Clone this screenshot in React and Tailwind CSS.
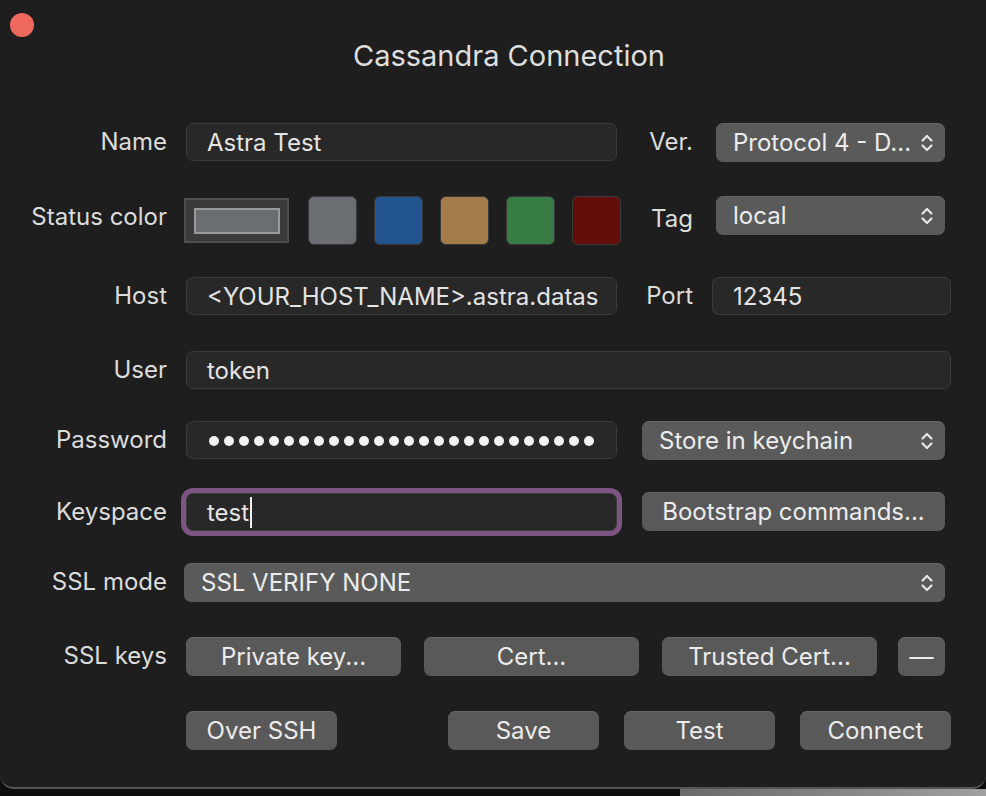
import React from 'react'

const font = { fontFamily: 'Inter, "Noto Sans", sans-serif' }

function Chevrons() {
  return (
    <svg width="14" height="22" viewBox="0 0 14 22" fill="none" stroke="#e6e6e6" strokeWidth="2.2" strokeLinecap="round" strokeLinejoin="round">
      <path d="M2.5 8.5 L7 4 L11.5 8.5" />
      <path d="M2.5 13.5 L7 18 L11.5 13.5" />
    </svg>
  )
}

function Label({ children, className = 'w-[167px]' }) {
  return <div className={`${className} shrink-0 text-right text-[24px] text-[#dcdcdc]`}>{children}</div>
}

function Field({ children, className = '' }) {
  return (
    <div className={`h-[38px] shrink-0 rounded-[7px] border border-[#3b3b3b] bg-[#282828] pl-[20px] pr-2 pt-[2px] flex items-center overflow-hidden whitespace-nowrap text-[24px] text-[#e4e4e4] ${className}`}>
      {children}
    </div>
  )
}

function Select({ children, className = '' }) {
  return (
    <div className={`h-[39px] shrink-0 rounded-[7px] bg-[#5a5a5a] border-t border-[#666] pl-[17px] pr-[11px] flex items-center justify-between whitespace-nowrap text-[24px] text-[#ececec] ${className}`}>
      <span>{children}</span>
      <Chevrons />
    </div>
  )
}

function Button({ children, className = '' }) {
  return (
    <div className={`h-[39px] shrink-0 rounded-[7px] bg-[#595959] border-t border-[#666] flex items-center justify-center whitespace-nowrap text-[24px] text-[#ececec] ${className}`}>
      {children}
    </div>
  )
}

const swatches = ['#6a6d72', '#22558f', '#a47c4c', '#377c45', '#620f0b']

export default function App() {
  return (
    <div className="w-[986px] h-[796px] bg-[#0e0e0e] overflow-hidden" style={font}>
      <div className="w-[986px] h-[789px] bg-[#1e1e1e] rounded-b-[14px] border-b-2 border-[#555] flex flex-col">
        {/* title bar */}
        <div className="h-[122px] shrink-0 flex items-start">
          <div className="mt-[13px] ml-[10px] w-[24px] h-[24px] rounded-full bg-[#ee6a5f]" />
          <div className="ml-[319px] mt-[34px] text-[29px] text-[#dedede]">Cassandra Connection</div>
        </div>

        {/* Name / Ver. */}
        <div className="h-[40px] flex items-center">
          <Label>Name</Label>
          <Field className="ml-[19px] w-[431px]">Astra Test</Field>
          <Label className="w-[76px]">Ver.</Label>
          <Select className="ml-[23px] w-[229px]">Protocol 4 - D...</Select>
        </div>

        {/* Status color / Tag */}
        <div className="mt-[34px] h-[49px] flex items-center">
          <Label className="w-[167px] mb-[8px]">Status color</Label>
          <div className="ml-[17px] w-[105px] h-[45px] shrink-0 border-2 border-[#4e4e4e] bg-[#3a3a3a] flex items-center justify-center">
            <div className="w-[86px] h-[26px] border-2 border-[#9a9a9a] bg-[#6a6d72]" />
          </div>
          <div className="ml-[19px] flex gap-[17px]">
            {swatches.map((c) => (
              <div key={c} className="w-[49px] h-[49px] rounded-[6px] border border-[#3a3a3a]" style={{ backgroundColor: c }} />
            ))}
          </div>
          <Label className="w-[72px] mb-[4px]">Tag</Label>
          <Select className="ml-[23px] w-[229px] self-start">local</Select>
        </div>

        {/* Host / Port */}
        <div className="mt-[31px] h-[40px] flex items-center">
          <Label>Host</Label>
          <Field className="ml-[19px] w-[431px]">&lt;YOUR_HOST_NAME&gt;.astra.datas</Field>
          <Label className="w-[76px]">Port</Label>
          <Field className="ml-[19px] w-[239px]">12345</Field>
        </div>

        {/* User */}
        <div className="mt-[34px] h-[40px] flex items-center">
          <Label>User</Label>
          <Field className="ml-[19px] w-[765px]">token</Field>
        </div>

        {/* Password */}
        <div className="mt-[30px] h-[40px] flex items-center">
          <Label>Password</Label>
          <Field className="ml-[19px] w-[431px] !pl-[22px]">
            <div className="flex gap-[5px]">
              {Array.from({ length: 26 }).map((_, i) => (
                <span key={i} className="w-[10px] h-[10px] rounded-full bg-[#f2f2f2]" />
              ))}
            </div>
          </Field>
          <Select className="ml-[25px] w-[303px]">Store in keychain</Select>
        </div>

        {/* Keyspace */}
        <div className="mt-[26px] h-[51px] flex items-center">
          <Label>Keyspace</Label>
          <Field className="ml-[19px] w-[431px] shadow-[0_0_0_5px_#7c5583]">
            <span>test</span>
            <span className="ml-[1px] w-[2px] h-[31px] bg-[#f0f0f0]" />
          </Field>
          <Button className="ml-[25px] w-[303px]">Bootstrap commands...</Button>
        </div>

        {/* SSL mode */}
        <div className="mt-[25px] h-[40px] flex items-center">
          <Label>SSL mode</Label>
          <Select className="ml-[17px] w-[761px]">SSL VERIFY NONE</Select>
        </div>

        {/* SSL keys */}
        <div className="mt-[34px] h-[40px] flex items-center">
          <Label>SSL keys</Label>
          <Button className="ml-[19px] w-[215px]">Private key...</Button>
          <Button className="ml-[23px] w-[215px]">Cert...</Button>
          <Button className="ml-[23px] w-[215px]">Trusted Cert...</Button>
          <Button className="ml-[21px] w-[47px]">—</Button>
        </div>

        {/* actions */}
        <div className="mt-[34px] h-[40px] flex items-center">
          <Button className="ml-[186px] w-[151px]">Over SSH</Button>
          <Button className="ml-[111px] w-[151px]">Save</Button>
          <Button className="ml-[25px] w-[151px]">Test</Button>
          <Button className="ml-[25px] w-[151px]">Connect</Button>
        </div>
      </div>
      <div className="flex h-[7px]">
        <div className="w-[680px] bg-[#0e0e0e]" />
        <div className="flex-1 bg-gradient-to-r from-[#6a6a6a] to-[#a0a0a0]" />
      </div>
    </div>
  )
}
